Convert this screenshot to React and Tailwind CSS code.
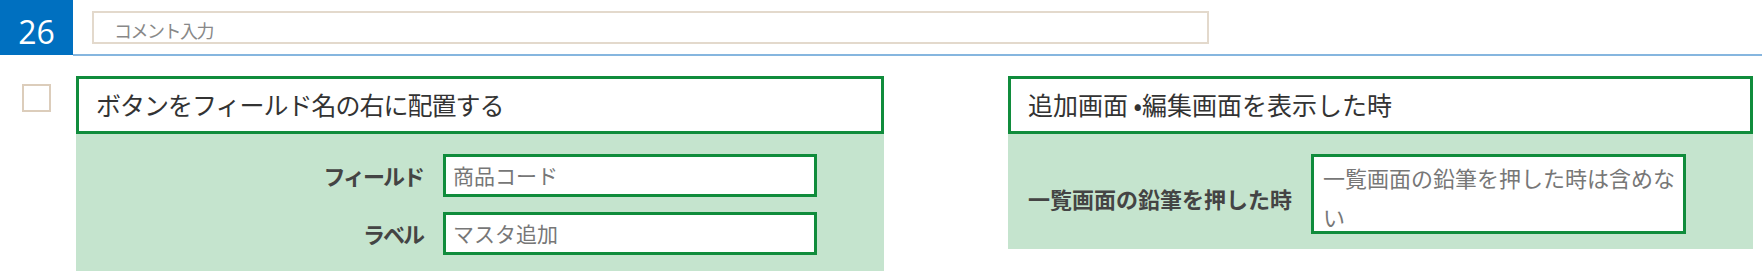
export default function App() {
  return (
    <div className="w-[1762px] h-[278px] bg-white overflow-hidden font-['Noto_Sans_CJK_JP','Noto_Sans',sans-serif]">
      <div className="flex h-[56px]">
        <div className="w-[73px] h-[55px] bg-[#0070c0] text-white text-[32px] font-['Open_Sans',sans-serif] flex items-center justify-center pt-[8px] shrink-0">
          26
        </div>
        <div className="flex-1 h-[56px] border-b-2 border-[#86b6df]">
          <div className="ml-[19px] mt-[11px] w-[1117px] h-[33px] border-2 border-[#e3d9cc] pl-[20px] pt-[5px] flex items-center text-[18px] tracking-[-1.5px] text-[#888]">
            コメント入力
          </div>
        </div>
      </div>
      <div className="flex mt-[20px]">
        <div className="ml-[22px] mt-[8px] w-[29px] h-[28px] border-2 border-[#dccdbb] shrink-0" />
        <div className="ml-[25px] w-[808px] shrink-0">
          <div className="h-[58px] border-[3px] border-[#108c3c] bg-white pl-[17px] flex items-center text-[25px] tracking-[-1px] text-[#333]">
            ボタンをフィールド名の右に配置する
          </div>
          <div className="bg-[#c5e4ce] pt-[20px] pb-[16px] flex flex-col gap-[15px]">
            <div className="flex items-center">
              <div className="w-[347px] text-right text-[22px] font-bold tracking-[-2px] text-[#444]">フィールド</div>
              <div className="ml-[20px] w-[374px] h-[43px] border-[3px] border-[#108c3c] bg-white pl-[7px] flex items-center text-[21px] text-[#777]">
                商品コード
              </div>
            </div>
            <div className="flex items-center">
              <div className="w-[347px] text-right text-[22px] font-bold tracking-[-2px] text-[#444]">ラベル</div>
              <div className="ml-[20px] w-[374px] h-[43px] border-[3px] border-[#108c3c] bg-white pl-[7px] flex items-center text-[21px] text-[#777]">
                マスタ追加
              </div>
            </div>
          </div>
        </div>
        <div className="ml-[124px] w-[745px] shrink-0">
          <div className="h-[58px] border-[3px] border-[#108c3c] bg-white pl-[17px] flex items-center text-[25px] text-[#333]">
            追加画面 •編集画面を表示した時
          </div>
          <div className="bg-[#c5e4ce] pt-[20px] pb-[15px] pl-[20px] flex items-center">
            <div className="w-[283px] pt-[8px] text-[22px] font-bold text-[#444] shrink-0">一覧画面の鉛筆を押した時</div>
            <div className="w-[375px] h-[80px] border-[3px] border-[#108c3c] bg-white pl-[9px] pt-[1px] overflow-hidden whitespace-nowrap text-[22px] leading-[39px] text-[#777] shrink-0">
              一覧画面の鉛筆を押した時は含めな
              <br />
              い
            </div>
          </div>
        </div>
      </div>
    </div>
  );
}
